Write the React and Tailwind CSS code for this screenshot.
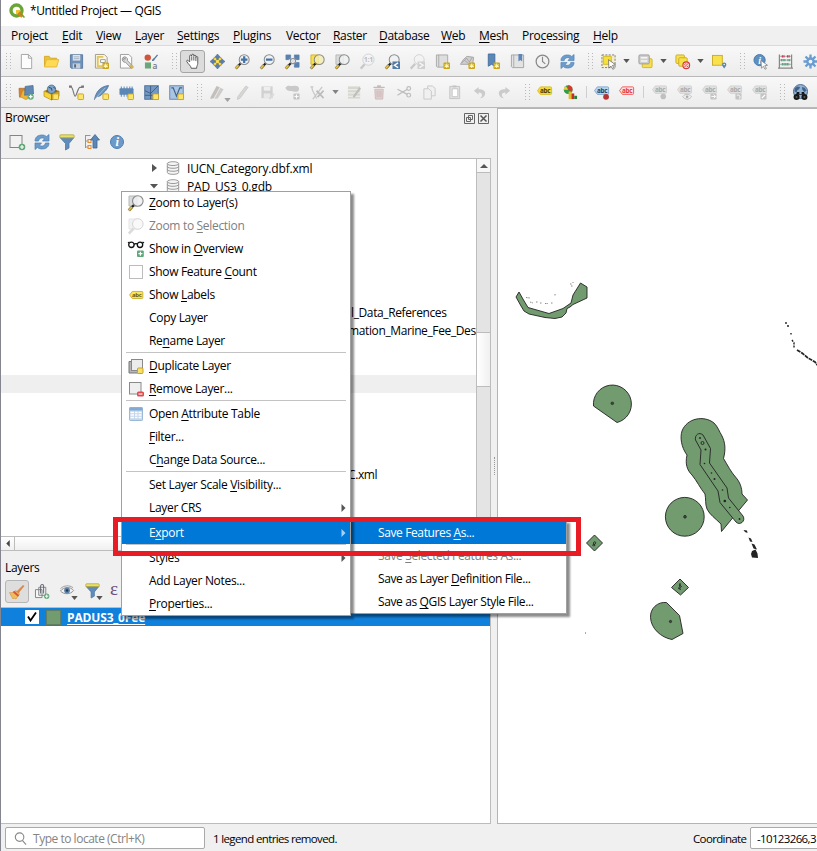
import React from "react";

const FONT = "font-['Open_Sans','Noto_Sans',sans-serif]";

/* Renders a caption whose mnemonic letter is preceded by "&". */
function Label({ text }) {
  const i = text.indexOf("&");
  if (i < 0) return <>{text}</>;
  return (
    <>
      {text.slice(0, i)}
      <span className="underline decoration-1 underline-offset-2">{text[i + 1]}</span>
      {text.slice(i + 2)}
    </>
  );
}

function Svg({ children, size = "size-4", className = "" }) {
  return (
    <svg viewBox="0 0 16 16" className={`${size} shrink-0 overflow-visible ${className}`} fill="none" strokeWidth="1">
      {children}
    </svg>
  );
}

const NewBadge = ({ x = 9, y = 9 }) => (
  <g>
    <rect x={x} y={y} width="7" height="7" rx="1" fill="#c9a51b" />
    <path d={`M${x + 3.5} ${y + 1.2}v4.6M${x + 1.3} ${y + 2.3}l4.4 2.5M${x + 5.7} ${y + 2.3}l-4.4 2.5`} stroke="#fff6b8" strokeWidth="1.1" />
  </g>
);
const YellowBox = () => <rect x="9.5" y="9.5" width="6" height="6" rx="0.8" fill="#fbe56b" stroke="#c9a227" />;
const GrayBox = () => <rect x="9" y="9" width="6.5" height="6.5" rx="0.8" fill="#c4c4c4" />;

const Lens = ({ cx = 9.8, cy = 6, r = 5.3, fill = "#eef0f1" }) => (
  <g>
    <path d="M0.8 15.6L4 12" stroke="#8a7430" strokeWidth="3" />
    <path d="M0.9 15.2L3.8 12" stroke="#e5c745" strokeWidth="1.6" />
    <path d="M4 12l2.2-2.2" stroke="#222" strokeWidth="2.4" />
    <circle cx={cx} cy={cy} r={r} fill={fill} fillOpacity="0.85" stroke="#8b8b8b" strokeWidth="1.1" />
  </g>
);

const Tag = ({ fill, stroke, color, y = 3 }) => (
  <g>
    <path d={`M0.5 ${y + 4}l3-4h11a1 1 0 0 1 1 1v6a1 1 0 0 1-1 1h-11z`} fill={fill} stroke={stroke} />
    <text x="8.7" y={y + 6.3} fontSize="6.8" fontWeight="700" textAnchor="middle" fill={color} fontFamily="Open Sans">abc</text>
  </g>
);
const GrayTag = () => <g transform="translate(0 -2)"><Tag fill="#e0e0e0" stroke="#d2d2d2" color="#aaa" /></g>;

const icons = {
  file: <path d="M2.5 0.5h7.5l3.500 3.500v11.500h-11zM10 0.500v4h3.500" fill="#fdfdfd" stroke="#a3a3a3" />,
  folder: (
    <>
      <path d="M0.500 13.500v-11h5l1.500 2h6.500v2" fill="#eac33c" stroke="#d5a92b" />
      <path d="M0.500 13.800l2.200-7.800h13l-2.200 7.800z" fill="#ffda55" stroke="#e4b93a" />
    </>
  ),
  save: (
    <>
      <path d="M1.500 0.800h13v14.400h-12l-1-1.200z" fill="#6f91b9" stroke="#587aa3" />
      <rect x="4" y="1" width="8" height="6" fill="#dfe5eb" />
      <path d="M5 3h6M5 5h6" stroke="#a6b2c0" />
      <rect x="4" y="10" width="8" height="5.500" fill="#c5cdd6" />
      <rect x="5.500" y="11" width="2" height="3.500" fill="#4e6a8c" />
    </>
  ),
  layout: (
    <>
      <path d="M1.500 0.500h9.500l3 3v11.500h-12.500z" fill="#faf6e6" stroke="#9f9a8a" />
      <path d="M4 2v12M4 3h6M4 13h5" stroke="#e0c65c" strokeWidth="2" />
      <path d="M7 6h5v3h-5z" fill="#fff" stroke="#999" />
      <NewBadge />
    </>
  ),
  layoutMgr: (
    <>
      <path d="M1.500 0.500h9l3 3v11.500h-12z" fill="#fbfbfb" stroke="#9c9c9c" />
      <path d="M4 4a3 3 0 0 1 5 3l6 6.500-1.800 1.800-6.200-6.500a3 3 0 0 1-3.300-4l2 1.600 1.300-1.200z" fill="#d9d9d9" stroke="#858585" strokeWidth="0.900" />
      <path d="M12 12l3 3" stroke="#d7b43c" strokeWidth="2" />
    </>
  ),
  style: (
    <>
      <circle cx="4" cy="3.800" r="3.400" fill="#d1553a" />
      <rect x="1" y="9" width="6.500" height="6.500" fill="#6ba77b" />
      <path d="M8.500 7.500c0-2 1-2.500 2-3l3.500-4 1 .8-3.500 4.200c-.5 1.500-1.500 2-3 2z" fill="#57779f" />
      <text x="9" y="15.500" fontSize="9" fontWeight="600" fill="#777" fontFamily="Open Sans">a</text>
    </>
  ),
  hand: (
    <path d="M5 8.500V2.200a1.100 1.100 0 0 1 2.200 0V1.300a1.100 1.100 0 0 1 2.200 0v1a1.100 1.100 0 0 1 2.200.2v1.200a1 1 0 0 1 2 0v6.300c0 2-1.200 2.500-1.200 5.200H6.600c0-2.500-3.400-4.500-4.700-7.200-.5-1.300.8-1.900 1.700-.9zM7.200 2.500v4.500M9.400 2.500v4.500M11.600 3.500v4" fill="#fff" stroke="#444" strokeWidth="0.900" />
  ),
  panSel: (
    <>
      <path d="M4 4h8v8h-8z" fill="#ffe24d" stroke="#c8a51f" />
      <path d="M8 0l3 3.500h-2v2.500h-2V3.500H5zM8 16l3-3.500h-2v-2.500h-2v2.500H5zM0 8l3.500-3v2h2.500v2H3.500v2zM16 8l-3.500-3v2h-2.500v2h2.500v2z" fill="#5b80ad" stroke="#3f638f" strokeWidth="0.500" />
    </>
  ),
  zoomIn: (<><Lens /><path d="M9.800 2.500v7M6.300 6h7" stroke="#4472a8" strokeWidth="2.400" /></>),
  zoomOut: (<><Lens /><path d="M6.300 6h7" stroke="#4472a8" strokeWidth="2.400" /></>),
  zoomFull: (
    <>
      <path d="M1 1h5v3H4v2H1zM15 1v5h-3V4h-2V1zM15 14h-5v-3h2V9h3z" fill="#5b80ad" stroke="#5b80ad" strokeWidth="0.800" />
      <path d="M3 3l10 9M13 3l-4 4" stroke="#5b80ad" strokeWidth="1.500" />
      <Lens cx={8.500} cy={7.500} r={2.800} />
    </>
  ),
  zoomSel: (<><path d="M1 1h8v10H1z" fill="#f7e04b" stroke="#cfb42c" /><Lens fill="#f5efb0" /></>),
  zoomLayer: (<><path d="M1 1h8v10H1z" fill="#d9dbdc" stroke="#b6b8b8" /><Lens /></>),
  zoomLayerOff: (<g opacity="0.350"><path d="M1 1h8v10H1z" fill="#d9dbdc" stroke="#b6b8b8" /><path d="M0.800 15.600L5.500 10.500" stroke="#999" strokeWidth="2.600" /><circle cx="9.800" cy="6" r="5.300" fill="#eee" stroke="#8b8b8b" /></g>),
  zoomNative: (
    <g opacity="0.450">
      <path d="M0.800 15.600L5 11" stroke="#999" strokeWidth="2.400" />
      <circle cx="9" cy="6" r="6" fill="#f5f5f5" stroke="#aaa" />
      <text x="9" y="8.800" fontSize="7.500" fontWeight="700" textAnchor="middle" fill="#777" fontFamily="Open Sans">1:1</text>
    </g>
  ),
  zoomLast: (<><Lens /><rect x="8" y="8" width="8" height="8" fill="#527ba8" /><path d="M14 9.500l-4 2.500 4 2.500" stroke="#fff" strokeWidth="1.400" /></>),
  zoomNext: (<g opacity="0.450"><path d="M0.800 15.600L5.500 10.500" stroke="#999" strokeWidth="2.400" /><circle cx="9.800" cy="6" r="5.300" fill="#f3f3f3" stroke="#aaa" /><rect x="8" y="8" width="8" height="8" fill="#aaa" /><path d="M10 9.500l4 2.500-4 2.500" stroke="#fff" strokeWidth="1.400" /></g>),
  newMap: (<><path d="M1.500 1h12v13h-11l-1-1z" fill="#dedede" stroke="#a9a9a9" /><path d="M4 1v13" stroke="#aaa" /><NewBadge /></>),
  new3d: (<><path d="M0.500 11l3-5 4-3.500 7 1-1 7.500z" fill="#cfcfcf" stroke="#a5a5a5" /><path d="M2 9.500l5-5 3 4 3-5M5 7l4 3" stroke="#9a9a9a" strokeWidth="0.800" /><NewBadge /></>),
  bookmark: (<><path d="M3.500 0h7v13l-3.500-2-3.500 2z" fill="#5b86b8" stroke="#456f9f" /><NewBadge /></>),
  bookmarks: (<><path d="M1.500 1h13v13.500h-12l-1-1z" fill="#e3e3e3" stroke="#a3a3a3" /><path d="M4 1v13" stroke="#aaa" /><path d="M9 0h4v8l-2-1.500L9 8z" fill="#5b86b8" /></>),
  clock: (<><circle cx="8" cy="8" r="6.800" fill="#f1f1f1" stroke="#888" strokeWidth="1.300" /><path d="M8 3v5l3 2.500" stroke="#888" strokeWidth="1.200" /></>),
  refresh: (
    <>
      <path d="M1 7c0-4 3-6 7-6 2 0 3.500.6 4.500 1.600L15 0.500v6.500H8.500l2-2.300c-2-1.600-5.500-.7-6 2.300z" fill="#6b9ccc" stroke="#4d80b5" strokeWidth="0.700" />
      <path d="M15 9c0 4-3 6-7 6-2 0-3.500-.6-4.500-1.600L1 15.500V9h6.500l-2 2.300c2 1.600 5.500.7 6-2.300z" fill="#6b9ccc" stroke="#4d80b5" strokeWidth="0.700" />
    </>
  ),
  select: (
    <>
      <rect x="1" y="1" width="14" height="13.500" stroke="#777" strokeDasharray="2.200 1.400" fill="#f2eec9" />
      <path d="M2.500 2.500h8.500v8.500H2.500z" fill="#f7df3c" stroke="#d3b62a" />
      <path d="M8 6l7.500 5.500-3.300.6 2 3.300-1.600.9-1.900-3.400-2.300 2.100z" fill="#fff" stroke="#666" strokeWidth="0.800" />
    </>
  ),
  selForm: (
    <>
      <rect x="4.500" y="5" width="10.500" height="9.500" rx="1" fill="#f7df4c" stroke="#cfb32e" />
      <rect x="1" y="1" width="11" height="9.500" rx="1" fill="#cfcfcf" stroke="#9a9a9a" />
      <path d="M3 4h7M3 7.500h7" stroke="#f5f5f5" strokeWidth="1.500" />
    </>
  ),
  deselect: (
    <>
      <rect x="1" y="1" width="9" height="9" rx="1" fill="#f9e14c" stroke="#c9ac26" />
      <rect x="4" y="4" width="9" height="9" rx="1" fill="#f9e14c" stroke="#c9ac26" />
      <circle cx="12" cy="12" r="3.600" fill="#f7dada" stroke="#d43c3c" strokeWidth="1.200" />
      <path d="M9.800 14.200l4.400-4.400M10 11.500l1.500-1.500M12.500 14l1.500-1.500" stroke="#d43c3c" />
    </>
  ),
  selLoc: (
    <>
      <rect x="0.500" y="1.500" width="10.500" height="10.500" fill="#f9e14c" stroke="#c9ac26" />
      <path d="M13 15.500c-1.500-2-2.300-3-2.300-4.200a2.300 2.300 0 0 1 4.600 0c0 1.200-.8 2.200-2.300 4.200z" fill="#5b86a8" />
      <circle cx="13" cy="11.300" r="0.800" fill="#fff" />
    </>
  ),
  identify: (
    <>
      <circle cx="7" cy="6.500" r="6" fill="#5d8fc0" stroke="#4a7aab" />
      <text x="7" y="10.500" fontSize="11" fontStyle="italic" fontWeight="700" textAnchor="middle" fill="#fff" fontFamily="Liberation Serif">i</text>
      <path d="M8.500 7l7 5-3 .5 1.800 3-1.500.8-1.700-3.200-2.100 2z" fill="#fff" stroke="#777" strokeWidth="0.800" />
    </>
  ),
  abacus: (
    <>
      <path d="M1.500 0.500v14.500M14.500 0.500v14.500M0 15h16" stroke="#888" strokeWidth="1.300" />
      <path d="M2 2.500h12M2 6.500h12M2 11h12" stroke="#999" strokeWidth="0.800" />
      <path d="M4 2.500h3M9.500 2.500h3" stroke="#c8394d" strokeWidth="2.600" strokeDasharray="1.400 .4" />
      <path d="M3 6.500h5M10 6.500h3M4 11h8" stroke="#5da681" strokeWidth="2.600" strokeDasharray="1.400 .4" />
    </>
  ),
  gear: (
    <>
      <path d="M8 0.500v15M0.500 8h15M2.700 2.700l10.600 10.600M13.300 2.700L2.700 13.300" stroke="#6b9ccf" strokeWidth="2.500" />
      <circle cx="8" cy="8" r="4.600" fill="#6b9ccf" />
      <circle cx="8" cy="8" r="2" fill="#eff5fa" />
    </>
  ),

  dsm: (
    <>
      <path d="M0 3.500h6v8.500l-5.500 1z" fill="#d9832e" stroke="#a8631f" strokeWidth="0.700" />
      <path d="M1.500 12.500l2.500-7 5 1v8.500l-2 .5z" fill="#edb532" stroke="#b9851f" strokeWidth="0.600" />
      <path d="M6.500 1.500l8.500-1 .5 9-9.500 1.500z" fill="#6188b5" stroke="#3e6793" strokeWidth="0.700" />
      <circle cx="12.500" cy="12.500" r="3.200" fill="#5fa777" /><path d="M12.500 10.500v4M10.500 12.500h4" stroke="#fff" strokeWidth="1.300" />
    </>
  ),
  gpkg: (
    <>
      <path d="M0 6.500l8-3 8 3-8 3.500z" fill="#8d6f14" />
      <circle cx="8" cy="4.500" r="4.500" fill="#7ea4c9" stroke="#3f5d7e" strokeWidth="0.700" />
      <path d="M5 2.500l3 1 .5 2.500M10 2l2 2" stroke="#2a4361" />
      <path d="M0 6.500l8 3.500v6l-8-4z" fill="#f8d435" stroke="#a98619" strokeWidth="0.700" />
      <path d="M16 6.500L8 10v6l8-4z" fill="#d8b022" stroke="#8d6f14" strokeWidth="0.700" />
      <YellowBox />
    </>
  ),
  shp: (<><path d="M1.500 1.500c3 0 3.500 10.500 5 10.500s3-9 5-9.500h3" stroke="#777" strokeWidth="1.200" /><path d="M0 0.500h3v2.500H0zM13 0.500h3v2.500h-3z" fill="#777" /><YellowBox /></>),
  feather: (<><path d="M0.500 15.500C2 7 7 1.500 15.500 0.500 14 6 10 8 8 10.500 6 12.500 4 12 3 12.500z" fill="#6690bc" stroke="#456d98" strokeWidth="0.800" /><path d="M1 15L12 3" stroke="#c9dbec" strokeWidth="0.700" /><YellowBox /></>),
  chip: (<><path d="M2.500 1.500v11M5.500 1.500v11M8.500 1.500v11M11.500 1.500v11M14 1.500v11" stroke="#6f93bc" strokeWidth="1.200" /><rect x="0.500" y="3.500" width="15" height="7" rx="1" fill="#5b86b5" /><YellowBox /></>),
  mesh: (<><rect x="0.800" y="0.800" width="14.400" height="14.400" fill="#7298c3" stroke="#4a6f9a" /><path d="M1 6l6 3 8-8M7 1v14M1 11h14" stroke="#38587f" strokeWidth="0.900" /><YellowBox /></>),
  virt: (<><rect x="0.800" y="0.800" width="14.400" height="14.400" fill="#a9c5e2" stroke="#5f88b5" /><path d="M2.500 3h2l3.500 9 3.500-9h2.500" stroke="#3f5f85" strokeWidth="1.200" /><YellowBox /></>),
  edits: (<g fill="#c2bfbc"><path d="M0.500 13L7 1l3.500 1.500L4 14l-3.500 1z" /><path d="M5 14L11 3l3.500 1.500L8.500 14l-3.500 1z" opacity="0.750" /></g>),
  pencil: <path d="M3 12.500L11.500 1l2.500 1.500L5.500 14l-3 1.500z" fill="#d6d6d4" stroke="#c3c3c3" strokeWidth="0.700" />,
  saveOff: (<g opacity="0.700"><path d="M1.500 1.500h12v12.500h-12z" fill="#c4c4c4" /><rect x="4" y="2" width="7" height="4" fill="#eee" /><rect x="4" y="9" width="7" height="5" fill="#e6e6e6" /><path d="M9 14.500l5-6 1.500 1.500-4.500 5.500z" fill="#d2d2d2" /></g>),
  addPoly: (<><path d="M0.500 3c2-4 6-1.500 8-2s6.500-.5 6.500 3-3 3.500-6 3-7.500 0-8.500-4z" fill="#c9c9c9" /><GrayBox /><path d="M12.200 10v4.500M10 12.200h4.500" stroke="#fff" /></>),
  vertex: (<><path d="M0.500 2h3M2 2.500c0 5 3 6 5 12M3 15L13 2" stroke="#c6c6c6" strokeWidth="1.300" /><path d="M7 6l7.500 8M14.500 6L8 13" stroke="#bcbcbc" strokeWidth="1.800" /></>),
  attrEdit: (<><rect x="1" y="1.500" width="13" height="13" fill="#d6d8cf" /><path d="M1 5h13M1 8.500h13M1 12h13" stroke="#f3f3f3" /><path d="M7 13L14 3" stroke="#bdbdbd" strokeWidth="2.200" /></>),
  trash: (<><path d="M1.500 2.500h12M5.500 1h4" stroke="#c6bbbb" strokeWidth="1.500" /><path d="M3 4.500h9l-.6 10.500H3.600z" fill="#e2cfcf" stroke="#cdbcbc" /><path d="M5.500 6v7M7.500 6v7M9.500 6v7" stroke="#c6b4b4" strokeWidth="0.800" /></>),
  cut: (<><path d="M0.500 4.500L11 10M0.500 11L11 4.500" stroke="#bdbdbd" strokeWidth="1.400" /><circle cx="12.500" cy="3.800" r="2" stroke="#bdbdbd" strokeWidth="1.300" /><circle cx="12.500" cy="10.800" r="2" stroke="#bdbdbd" strokeWidth="1.300" /></>),
  copy: (<g fill="#f0f0f0" stroke="#c9c9c9"><path d="M6 1h5l3 2.500v8H6z" /><path d="M2 4h5l3 2.500v8.500H2z" /></g>),
  paste: (<g fill="#e3e3e3" stroke="#c3c3c3"><path d="M3 1.500h10.500v13H3z" /><path d="M5.500 4h6v8.500h-6z" fill="#fff" /><path d="M6 1.500h4" strokeWidth="2" /></g>),
  undo: <path d="M2 6l5-4v2.500c5 0 7.500 2 7 5s-3 4.500-5.500 4.500c3-1.500 3.500-6-1.500-6v2.500z" fill="#cbcbcb" />,
  redo: <path d="M14 6L9 2v2.500c-5 0-7.500 2-7 5s3 4.500 5.500 4.500c-3-1.500-3.500-6 1.500-6v2.500z" fill="#cbcbcb" />,
  abcYellow: <g transform="translate(-1 -1)"><Tag fill="#f6dd35" stroke="#d9bd22" color="#453d10" /></g>,
  diagram: (<><circle cx="5.500" cy="5" r="4.700" fill="#2f9e49" /><path d="M5.500 5V.3a4.700 4.700 0 0 1 4.300 6.700z" fill="#d9372b" /><path d="M5.500 5H.8a4.700 4.700 0 0 1 2.200-4z" fill="#f3cf3a" /><path d="M6 7h3v8H6z" fill="#e3be24" /><path d="M9 9h3v6H9z" fill="#c22f27" /><path d="M12 11.500h3v3.500h-3z" fill="#27803c" /></>),
  abcPin: (<><g transform="translate(-1 -1)"><Tag fill="#bdd6ef" stroke="#7fa6cf" color="#27405f" /></g><circle cx="11.800" cy="12.600" r="3.100" fill="#b93232" /></>),
  abcRed: <g transform="translate(-1 -1)"><Tag fill="#ffdede" stroke="#f05a5a" color="#dd3b3b" /></g>,
  tagOff1: (<><GrayTag /><circle cx="12" cy="12.200" r="3" fill="#c0c0c0" /></>),
  tagOff2: (<><GrayTag /><path d="M6 12.500c3-3.500 6.500-3.500 9.500 0-3 3.500-6.500 3.500-9.500 0z" fill="#eee" stroke="#bbb" /><circle cx="10.800" cy="12.500" r="1.400" fill="#aaa" /></>),
  tagOff3: (<><GrayTag /><GrayBox /><path d="M10 12.200h4.500M12.500 10.200l2 2-2 2" stroke="#fff" /></>),
  tagOff4: (<><GrayTag /><GrayBox /><path d="M10.500 11c3-1 4 1 3 3.500" stroke="#fff" /></>),
  tagOff5: (<><GrayTag /><GrayBox /><path d="M10.500 14l3.500-3.500" stroke="#fff" strokeWidth="1.400" /></>),
  globe: (
    <>
      <circle cx="8" cy="7" r="7.500" fill="#8fb2d6" stroke="#4a6684" />
      <path d="M2 3.500l2.500-2 3 .5-1 2.500-2 1L4 8 1.500 7zM9.500 2l3 1 2 3-2.500 1.500L10 5z" fill="#44618a" />
      <path d="M4.200 7.500h2.600v2h2.400v-2h2.600l1 3H3.200z" fill="#161616" />
      <circle cx="3.800" cy="12.700" r="3.200" fill="#161616" />
      <circle cx="12.200" cy="12.700" r="3.200" fill="#161616" />
      <circle cx="3.800" cy="12.900" r="1.100" fill="#555" />
      <circle cx="12.200" cy="12.900" r="1.100" fill="#555" />
    </>
  ),

  addLayer: (<><rect x="1" y="1.500" width="12" height="12" fill="#f1f1f1" stroke="#848484" /><circle cx="13" cy="13" r="3.300" fill="#5fa777" /><path d="M13 11v4M11 13h4" stroke="#fff" strokeWidth="1.200" /></>),
  funnel: (<><path d="M1 3.500l5.500 6v6.500l3.500-2V9.500l5-6z" fill="#5f8cba" stroke="#4c78a6" strokeWidth="0.800" /><rect x="0.800" y="0.800" width="14.400" height="3" rx="1" fill="#e9e06a" stroke="#b1a63e" strokeWidth="0.800" /></>),
  collapse: (<><path d="M1.500 1.500h5M1.500 1v13M1.500 7h3M1.500 13h3" stroke="#a2937d" /><rect x="4" y="5.500" width="3" height="3" stroke="#e48b36" /><rect x="4" y="11.500" width="3" height="3" stroke="#e48b36" /><path d="M11 0.500l4.500 5.500h-2.500v8H9V6H6.500z" fill="#5b88b8" stroke="#3f6891" strokeWidth="0.800" /></>),
  info: (<><circle cx="8" cy="8" r="6.500" fill="#6a99ca" stroke="#4f7fb0" /><text x="8" y="12.300" fontSize="12.500" fontStyle="italic" fontWeight="700" textAnchor="middle" fill="#fff" fontFamily="Liberation Serif">i</text></>),
  db: (<g fill="#f4f4f4" stroke="#8d8d8d"><path d="M1.500 3v10c0 3 13 3 13 0V3" /><ellipse cx="8" cy="3" rx="6.500" ry="2.200" /><path d="M1.500 6.300c0 2.700 13 2.700 13 0M1.500 9.700c0 2.700 13 2.700 13 0" fill="none" /></g>),
  brush: (<><path d="M0.500 8.500c2 1 4-.5 6.500-2l3.500 3.500-3.500 5-2.200-1-.8 1-1.500-2.500z" fill="#f0bb5e" stroke="#d99a48" strokeWidth="0.700" /><path d="M4.500 7.500l5 4.500" stroke="#d6573a" strokeWidth="2" /><path d="M7 7.500l1.500-1 5.500-5.500 1.500 1-5 6-.5 1.500z" fill="#d98a4c" /></>),
  group: (<><path d="M0.500 6h7v8.500h-7zM4 3.500h7.500v8.500H4z" fill="#f6f6f6" stroke="#7b837e" /><path d="M6 10V2.200a1.600 1.600 0 0 1 3.200 0V10" stroke="#667" strokeWidth="1.100" /><circle cx="12.500" cy="13" r="2.800" fill="#5fa777" /><path d="M12.500 11.200v3.600M10.700 13h3.600" stroke="#fff" /></>),
  eye: (<><path d="M0.500 8.500C4 4 11 3.500 14.500 8 11 12.500 4 12.500.5 8.500z" fill="#f2f2f2" stroke="#8a8a8a" /><circle cx="7.500" cy="8" r="3.100" fill="#5a82ab" /><circle cx="7.500" cy="8" r="1.300" fill="#23374e" /><path d="M0.500 6C4 2.500 10 2 14 5" stroke="#999" /></>),
  glasses: (<><path d="M0 2l1.500-1M16 2l-1.500-1M6 3.500c1-1 3-1 4 0" stroke="#111" strokeWidth="1.300" /><circle cx="3.400" cy="3.800" r="2.700" stroke="#111" strokeWidth="1.300" fill="#fff" /><circle cx="12" cy="3.800" r="2.700" stroke="#111" strokeWidth="1.300" fill="#fff" /><rect x="9" y="9.500" width="6.800" height="6.500" rx="1" fill="#5fa777" /><path d="M12.400 10.700v4M10.400 12.700h4" stroke="#fff" strokeWidth="1.200" /></>),
  checkbox: <rect x="1.500" y="1.500" width="13" height="13" fill="#fff" stroke="#bcbcbc" />,
  abcMenu: <g transform="translate(1.200 1.800) scale(0.880)"><Tag fill="#fae45a" stroke="#c9ac26" color="#66591b" /></g>,
  duplicate: (<><path d="M1 3.500h2.500v9h9v2.500H1z" fill="#b5b5b5" stroke="#777" /><rect x="3.500" y="1.500" width="11" height="11" fill="#ececec" stroke="#888" /><rect x="9.500" y="10" width="5.500" height="5.500" rx="1" fill="#f6df6a" stroke="#c9a227" /></>),
  remove: (<><rect x="1.500" y="1.500" width="11.500" height="11.500" fill="#efefef" stroke="#8a8a8a" /><rect x="9" y="10.500" width="7" height="5" rx="1.500" fill="#e0484c" /><path d="M10.500 13h4" stroke="#fff" strokeWidth="1.200" /></>),
  table: (<><rect x="1.500" y="1.500" width="13" height="13" rx="0.800" fill="#c3d6eb" stroke="#9ab8d8" /><rect x="1.500" y="1.500" width="13" height="3" fill="#82aad4" /><path d="M2.500 6.500h3.500M7 6.500h2.500M10.500 6.500h3M2.500 9h3.500M7 9h2.500M10.500 9h3M2.500 11.500h3.500M7 11.500h2.500M10.500 11.500h3" stroke="#fff" strokeWidth="1.500" /></>),
};

const Icon = ({ name, size, className }) => <Svg size={size} className={className}>{icons[name]}</Svg>;

const Down = ({ className = "" }) => (
  <svg viewBox="0 0 8 5" className={`h-[4px] w-[7px] shrink-0 ${className}`}><path d="M0 0h8L4 5z" fill="#555" /></svg>
);

function Grip() {
  return (
    <svg viewBox="0 0 5 18" shapeRendering="crispEdges" className="h-[18px] w-[5px] shrink-0">
      <path d="M0.500 1v17M4.500 1v17" stroke="#b9b9b9" strokeDasharray="1 2" />
    </svg>
  );
}

/* "|" is a grip, "v" and "w" drop-down arrows, "-" a separator. */
function Toolbar({ items }) {
  return (
    <div className="flex h-[31px] shrink-0 items-center overflow-hidden border-b border-[#b9b9b9] bg-linear-to-b from-[#f8f8f8] to-[#ececec]">
      <div className="flex w-[12.500px] shrink-0 pl-[5px]"><Grip /></div>
      {items.map((it, i) => {
        if (it === "|") return <div key={i} className="flex w-4 shrink-0 pl-[8px]"><Grip /></div>;
        if (it === "v" || it === "w") return <div key={i} className="flex w-3 shrink-0 justify-center"><Down className={it === "w" ? "opacity-70" : ""} /></div>;
        if (it === "-") return <div key={i} className="flex w-[7px] shrink-0 justify-center"><div className="h-[12px] w-px bg-[#cfcfcf]" /></div>;
        const on = it === "hand";
        return (
          <div key={i} className={`flex h-[23px] w-[25px] shrink-0 items-center justify-center ${on ? "rounded-[3px] border border-[#a5a5a5] bg-[#dcdcdc]" : ""}`}>
            <Icon name={it} size="size-[15px]" />
            {it === "edits" && <Down className="mt-4 -mr-1.5 -ml-px opacity-50" />}
          </div>
        );
      })}
    </div>
  );
}

const menus = [
  ["Pro&ject", "w-[51px]"], ["&Edit", "w-[34px]"], ["&View", "w-[39px]"], ["&Layer", "w-[42px]"], ["&Settings", "w-[56px]"],
  ["&Plugins", "w-[53px]"], ["Vect&or", "w-[47px]"], ["&Raster", "w-[46px]"], ["&Database", "w-[62px]"], ["&Web", "w-[38px]"],
  ["&Mesh", "w-[43px]"], ["Pro&cessing", "w-[71px]"], ["&Help", "w-[50px]"],
];

const row1 = ["file", "folder", "save", "layout", "layoutMgr", "style", "|", "hand", "panSel", "zoomIn", "zoomOut", "zoomFull", "zoomSel", "zoomLayer", "zoomNative", "zoomLast", "zoomNext", "newMap", "new3d", "bookmark", "bookmarks", "clock", "refresh", "|", "select", "v", "selForm", "v", "deselect", "v", "selLoc", "|", "identify", "abacus", "gear"];
const row2 = ["dsm", "gpkg", "shp", "feather", "chip", "mesh", "virt", "|", "edits", "pencil", "saveOff", "addPoly", "vertex", "w", "attrEdit", "trash", "cut", "copy", "paste", "undo", "redo", "|", "abcYellow", "diagram", "-", "abcPin", "abcRed", "-", "tagOff1", "tagOff2", "tagOff3", "tagOff4", "tagOff5", "|", "globe"];

const contextItems = [
  { t: "&Zoom to Layer(s)", icon: "zoomLayer" },
  { t: "Zoom to &Selection", icon: "zoomLayerOff", off: true },
  { t: "Show in &Overview", icon: "glasses" },
  { t: "Show Feature &Count", icon: "checkbox" },
  { t: "Show &Labels", icon: "abcMenu" },
  { t: "Copy Layer" },
  { t: "Re&name Layer" },
  null,
  { t: "&Duplicate Layer", icon: "duplicate" },
  { t: "&Remove Layer...", icon: "remove" },
  null,
  { t: "Open &Attribute Table", icon: "table" },
  { t: "&Filter..." },
  { t: "C&hange Data Source..." },
  null,
  { t: "Set Layer Scale &Visibility..." },
  { t: "Layer CRS", sub: true },
  null,
  { t: "E&xport", sub: true, on: true },
  null,
  { t: "Styles", sub: true },
  { t: "Add Layer Notes..." },
  { t: "&Properties..." },
];

const subItems = [
  { t: "Save Features &As...", on: true },
  { t: "Save &Selected Features As...", off: true },
  { t: "Save as Layer &Definition File..." },
  { t: "Save as &QGIS Layer Style File..." },
];

function MenuItem({ item }) {
  if (!item) return <div className="mx-[4px] h-[2px] border-t border-[#c3c3c3]" />;
  const tone = item.on ? "bg-[#0078d7] text-white" : item.off ? "text-[#808080]" : "text-black";
  return (
    <div className={`flex h-[23px] items-center ${tone}`}>
      <div className="flex w-[27px] shrink-0 items-center pl-[6px]">{item.icon && <Icon name={item.icon} />}</div>
      <div className="grow pt-px whitespace-nowrap"><Label text={item.t} /></div>
      {item.sub && (
        <svg viewBox="0 0 4 8" className="mr-[4px] h-[8px] w-[5px]"><path d="M0 0l4 4-4 4z" fill={item.on ? "#a9d0f2" : "#555"} /></svg>
      )}
    </div>
  );
}

/* Browser tree: one entry per 18px row, blank where nothing is listed. */
const treeRows = [
  { t: "IUCN_Category.dbf.xml", arrow: "right" },
  { t: "PAD_US3_0.gdb", arrow: "down" },
  {}, {}, {}, {}, {}, {},
  { t: "l_Data_References", at: "pl-[350px]" },
  { t: "mation_Marine_Fee_Des", at: "pl-[347px]" },
  {}, {}, { hl: true }, {}, {}, {}, {},
  { t: "C.xml", at: "pl-[347px]" },
];

function TreeRow({ row }) {
  return (
    <div className={`flex h-[18px] items-center whitespace-nowrap ${row.hl ? "bg-[#efefef]" : ""} ${row.at || ""}`}>
      {row.arrow && (
        <>
          <div className="flex w-[163px] shrink-0 justify-end pr-[6px]">
            <svg viewBox="0 0 8 8" className="size-[8px]"><path d={row.arrow === "right" ? "M2 0l5 4-5 4z" : "M0 2h8L4 6.500z"} fill="#555" /></svg>
          </div>
          <div className="w-[23px] shrink-0 pl-[2px]"><Icon name="db" size="size-[14px]" /></div>
        </>
      )}
      <span className={`pt-[2px] ${row.arrow ? "tracking-[-0.190px]" : "tracking-[-0.380px]"}`}>{row.t}</span>
    </div>
  );
}

function MapCanvas() {
  return (
    <svg viewBox="498 109 319 715" className="h-[715px] w-[319px]" fill="#729b6f" stroke="#232323" strokeWidth="0.900">
      <path d="M516 297L519 292L523.500 300L528 307.500L549 313.500L563 308.500L571 303L573 295L580.500 283L587 287V298L573 304.500L570 307L567 308.500L566 313L562 317L555 318.500L545 317.500L529 314L524 311L521 306z" />
      <path d="M593.500 406a19 19 0 1 1 23.500 16.500z" />
      <circle cx="612.300" cy="403.300" r="1.400" fill="#232323" fillOpacity="0.700" strokeWidth="0.500" />
      <path d="M687 455C681 447 680 437 682 431C687 418 704 415 714 423C718 427 719 431 722 436C725 442 726 449 723.500 458.500C728 466 731 472 735.500 477C740 482 742 488 742 494L747.500 500L740 509L721.500 531.500L721 524C715 518 710 515 707 509C705 504 706 499 705 494C700 488 697 481 692 475C687 470 685 464 687 455z" />
      <path d="M695.500 440C694.500 435 699 431.500 703 435L710.500 448.500L709.500 463L727 488L728.500 498L743 516C746 521 740 526 736 522L720 502.500L718 491L700 464.500L701 450z" />
      <g fill="#232323" stroke="none">
        <circle cx="700" cy="438" r="0.900" /><circle cx="702.500" cy="443" r="1.500" fill="none" stroke="#232323" />
        <circle cx="705.500" cy="449.500" r="1" /><circle cx="704.500" cy="463.500" r="0.800" /><circle cx="711.500" cy="473" r="0.800" />
        <circle cx="714.500" cy="479" r="1" /><circle cx="722.500" cy="490" r="0.800" /><circle cx="724.800" cy="501" r="1.300" />
        <circle cx="729.800" cy="507.500" r="0.800" /><circle cx="739.500" cy="519" r="0.900" />
        <path d="M743.500 530l3.500.5.500 2.500-2.500-1zM748.500 537.500l2.500 1 1.500 3.500-2.500-.5zM751.500 543.500l3 1 2.500 5-3.500-1zM751 554l1-3 3.500-1.500 2 4 .5 4.500-6-.5z" />
      </g>
      <circle cx="684.800" cy="516.800" r="19.400" />
      <circle cx="685" cy="516.800" r="1.300" fill="#3d5a3b" />
      <path d="M594.500 535l8 8-8 8-8-8z" /><path d="M593 543l2-1.500 1 1.500-1.500 1.500zM592.500 545l2-1 .5 1.500-1.500.5z" strokeWidth="0.800" />
      <path d="M680 579l8.500 8.500-8 7.500-9-7.500z" /><path d="M680 583.500v2l1.500 1-2 1.500 1 1.500-2-1 1-2z" />
      <path d="M666.500 602.500L679.500 615.500L683 633.500L672 639.500C661 637.500 651 628.500 650.500 617.500C650 608.500 657.500 601.500 666.500 602.500z" />
      <circle cx="670.500" cy="621.500" r="1.100" fill="#3d5a3b" />
      <g stroke="#555" strokeWidth="1" fill="none">
        <path d="M526 297.500l4 .5M530 302l3 1M536 302h2M540 303h2M545 303.500h3M551 303h1.500M555 294v2M570 284h2M573 282v1M571 286h2" strokeDasharray="1.500 .8" opacity="0.700" />
        <path d="M786 322v3M787 326h2M791 333v1.500M792 340l2 3v5" strokeWidth="1.400" strokeDasharray="2 1" stroke="#232323" />
        <path d="M797 350l5 3 6 5 7 4 3 4" strokeWidth="1.700" strokeDasharray="4 .8" stroke="#232323" />
        <path d="M585 633h1" />
      </g>
    </svg>
  );
}

function DockButtons() {
  return (
    <div className="flex gap-[3px] pr-[2px]">
      <svg viewBox="0 0 11 11" className="size-[11px]"><path d="M.5.500h10v10H.5zM4.500 2.500h4v4h-4zM2.500 4.500h4v4h-4z" fill="none" stroke="#666" /></svg>
      <svg viewBox="0 0 11 11" className="size-[11px]"><path d="M.5.500h10v10H.5z" fill="none" stroke="#666" /><path d="M2.500 2.500l6 6M8.500 2.500l-6 6" stroke="#555" strokeWidth="1.500" /></svg>
    </div>
  );
}

export default function App() {
  return (
    <div className={`relative flex h-[851px] w-[817px] flex-col overflow-hidden border-l border-[#85858f] bg-[#f0f0f0] text-[12px] leading-[16px] tracking-[-0.300px] text-black ${FONT}`}>
      <div className="flex h-[26px] shrink-0 items-center bg-white pb-[4px] pl-[8px]">
        <svg viewBox="0 0 16 16" className="size-4 shrink-0">
          <circle cx="7.500" cy="7.500" r="5.500" fill="none" stroke="#6aa636" strokeWidth="3.400" />
          <path d="M8 8l5.500 5.500" stroke="#ee7913" strokeWidth="3.400" />
          <path d="M7 7h4.500l-1 1.500L8.500 11H7z" fill="#f0c32e" />
          <path d="M11 10l4.500 4.500" stroke="#6aa636" strokeWidth="1.500" />
        </svg>
        <span className="ml-[5px] tracking-[-0.370px]">*Untitled Project — QGIS</span>
      </div>
      <div className="flex h-[20px] shrink-0 items-center border-b border-[#dadada] pt-px pl-[10px]">
        {menus.map(([t, w]) => <div key={t} className={`${w} shrink-0 whitespace-nowrap`}><Label text={t} /></div>)}
      </div>
      <Toolbar items={row1} />
      <Toolbar items={row2} />

      <div className="flex h-[716px] shrink-0">
        <div className="flex w-[490px] shrink-0 flex-col">
          <div className="flex h-[20px] items-center justify-between pl-[4px]"><span>Browser</span><DockButtons /></div>
          <div className="flex h-[30px] items-center gap-[9px] pb-[2px] pl-[8px]">
            {["addLayer", "refresh", "funnel", "collapse", "info"].map((n) => <Icon key={n} name={n} />)}
          </div>
          <div className="flex h-[393px] flex-col border border-l-0 border-[#bcbcbc] bg-white">
            <div className="flex h-[377px]">
              <div className="w-[475px] shrink-0 overflow-hidden">
                {treeRows.map((r, i) => <TreeRow key={i} row={r} />)}
              </div>
              <div className="flex w-[14px] flex-col border-l border-[#bcbcbc] bg-[#e4e4e4]">
                <div className="flex h-[14px] items-center justify-center border-b border-[#bcbcbc] bg-[#f7f7f7]">
                  <svg viewBox="0 0 8 4" className="h-[4px] w-[8px]"><path d="M0 4h8L4 0z" fill="#555" /></svg>
                </div>
                <div className="h-[159px]" />
                <div className="h-[55px] border-y border-[#bcbcbc] bg-linear-to-r from-white to-[#f0f0f0]" />
              </div>
            </div>
            <div className="flex h-[14px] border-t border-[#bcbcbc] bg-linear-to-b from-white to-[#f0f0f0]">
              <div className="flex w-[14px] items-center justify-center border-r border-[#bcbcbc]">
                <svg viewBox="0 0 4 8" className="h-[7px] w-[4px]"><path d="M4 0v8L0 4z" fill="#444" /></svg>
              </div>
            </div>
          </div>
          <div className="flex h-[29px] items-center pt-[4px] pl-[4px]">Layers</div>
          <div className="flex h-[27px] items-center pb-[4px] pl-[4px]">
            <div className="flex h-[23px] w-[24px] items-center justify-center rounded-[3px] border border-[#b5b5b5] bg-[#dedede]"><Icon name="brush" /></div>
            <div className="flex w-[26px] justify-center"><Icon name="group" size="size-[15px]" /></div>
            <div className="flex w-[25px] pl-[5px]"><Icon name="eye" size="size-[15px]" /><Down className="mt-[13px] -ml-[4px]" /></div>
            <div className="flex w-[25px] pl-[5px]"><Icon name="funnel" size="size-[15px]" /><Down className="mt-[13px] -ml-[4px]" /></div>
            <span className="-mt-[6px] pl-[5px] font-['Liberation_Serif',serif] text-[19px] leading-none text-[#6b4e7d]">ε</span>
          </div>
          <div className="flex grow flex-col border border-l-0 border-[#bcbcbc] bg-white">
            <div className="flex h-[18px] items-center bg-[#0f80dc] text-white">
              <div className="ml-[24px] flex size-[14px] items-center justify-center bg-white">
                <svg viewBox="0 0 10 10" className="size-[10px]"><path d="M1 4.500l2.500 4L9 .5" fill="none" stroke="#000" strokeWidth="1.800" /></svg>
              </div>
              <div className="ml-[7px] size-[15px] border border-[#5c7f66] bg-[#729b6f]" />
              <span className="ml-[6px] pt-[2px] font-bold tracking-[-0.150px] underline underline-offset-2">PADUS3_0Fee</span>
            </div>
          </div>
        </div>
        <div className="flex w-[6px] shrink-0 items-center justify-center">
          <div className="h-[18px] border-l border-dotted border-[#999]" />
        </div>
        <div className="w-[321px] shrink-0 overflow-hidden border-y border-l border-[#b4b4b4] bg-white"><MapCanvas /></div>
      </div>

      <div className="flex grow items-center pt-px text-[11.500px] tracking-[-0.640px] whitespace-nowrap">
        <div className="ml-[4px] flex h-[22px] w-[200px] shrink-0 items-center rounded-[2px] border border-[#a9a9a9] bg-white pl-[8px] text-[12px] tracking-[-0.480px] text-[#848484]">
          <svg viewBox="0 0 14 14" className="size-[13px]" fill="none" stroke="#888" strokeWidth="1.200"><circle cx="6" cy="5.500" r="4.600" /><path d="M9 9l4 4.500" /></svg>
          <span className="ml-[6px] pt-px">Type to locate (Ctrl+K)</span>
        </div>
        <span className="ml-[8px] w-[480px] shrink-0 pt-px">1 legend entries removed.</span>
        <span className="w-[53px] shrink-0 pt-px">Coordinate</span>
        <div className="ml-[4px] flex h-[22px] w-[80px] shrink-0 items-center rounded-[2px] border border-[#a9a9a9] bg-white pt-px pl-[6px]">-10123266,3</div>
      </div>

      <div className="absolute top-[520px] left-[350px] w-[216px] border border-l-0 border-[#a0a0a0] bg-white tracking-[-0.380px] shadow-[3px_3px_2px_rgba(0,0,0,0.450)]">
        {subItems.map((it) => <MenuItem key={it.t} item={it} />)}
      </div>
      <div className="absolute top-[191px] left-[120px] w-[230px] border border-[#a0a0a0] bg-white tracking-[-0.320px] shadow-[3px_3px_2px_rgba(0,0,0,0.450)]">
        <div className="-mt-px">
          {contextItems.map((it, i) => <MenuItem key={i} item={it} />)}
        </div>
      </div>
      <div className="absolute top-[517px] left-[112px] h-[39px] w-[468px] border-[5px] border-[#e81c24]" />
    </div>
  );
}
